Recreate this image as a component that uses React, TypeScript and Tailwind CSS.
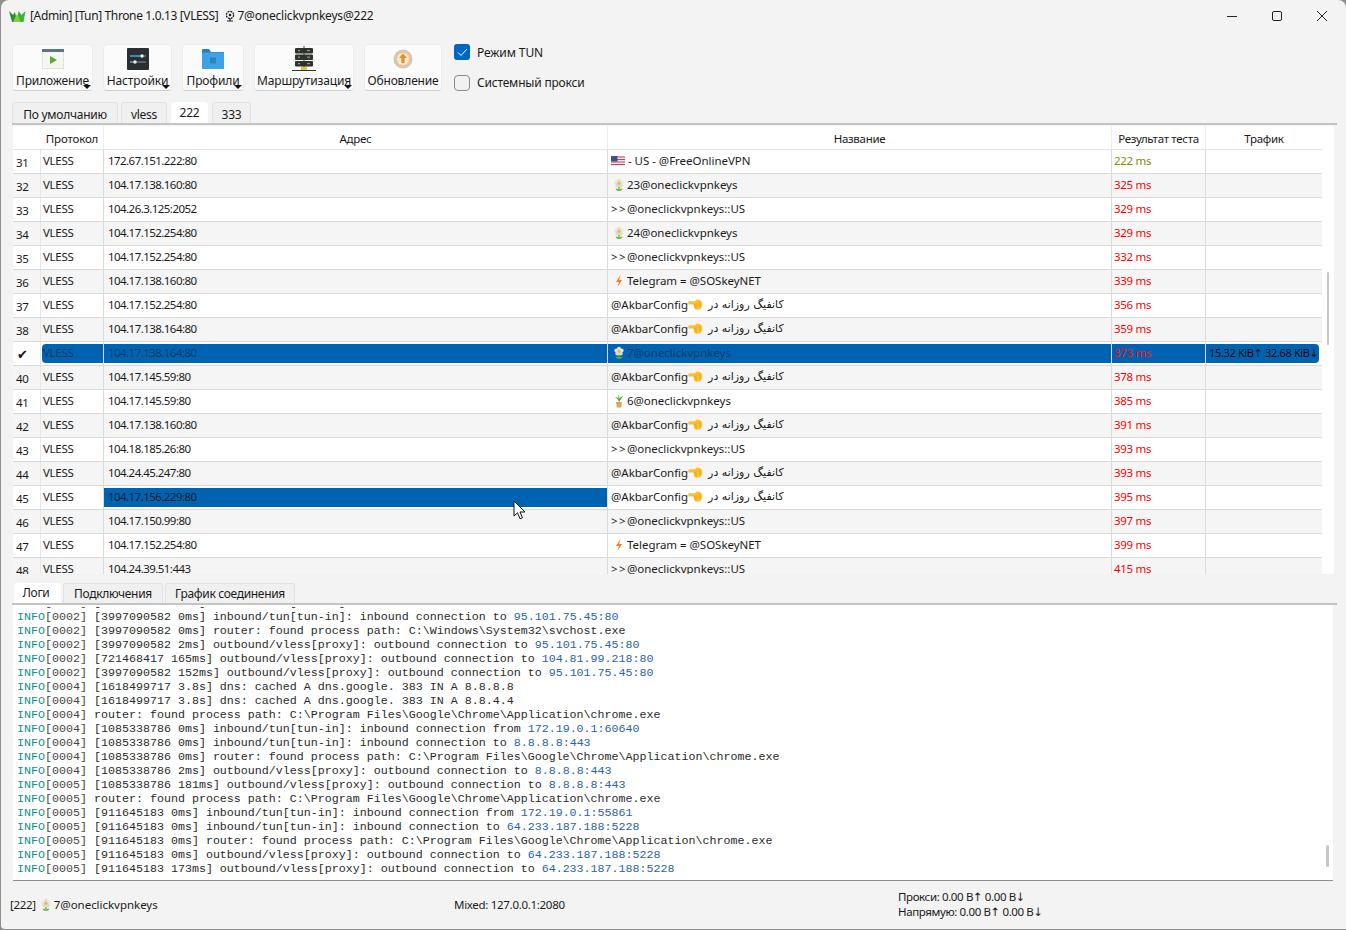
import type { ReactNode } from 'react';

const uiFont = "font-['Noto_Sans','DejaVu_Sans',sans-serif]";

function Flower() {
  return (
    <svg width="12" height="14" viewBox="0 0 12 14" className="shrink-0">
      <path d="M6 9v4" stroke="#5cb531" strokeWidth="1.4" />
      <path d="M2.500 10.500c1.500 0 3 .8 3.500 2.500-1.700 0-3-.8-3.500-2.500zM9.500 10.500c-1.500 0-3 .8-3.500 2.500 1.700 0 3-.8 3.500-2.500z" fill="#5cb531" />
      <circle cx="6" cy="2.800" r="2" fill="#dededa" />
      <circle cx="3.400" cy="4.500" r="2" fill="#e6e6e2" />
      <circle cx="8.600" cy="4.500" r="2" fill="#e6e6e2" />
      <circle cx="4.300" cy="7.400" r="2" fill="#dcdcd6" />
      <circle cx="7.700" cy="7.400" r="2" fill="#dcdcd6" />
      <circle cx="6" cy="5.300" r="1.700" fill="#f5b93c" />
    </svg>
  );
}

function Plant() {
  return (
    <svg width="12" height="14" viewBox="0 0 12 14" className="shrink-0">
      <path d="M6 8C5 5 3 4 2 3c2 0 3 1 3.500 2L5 1c1 1 1.500 2.500 1.500 4C7 3.500 8 2.500 10 2 9 4 7.500 6 6 8z" fill="#4da83a" />
      <path d="M3 8h6l-.8 5.500H3.800z" fill="#e8a05c" />
    </svg>
  );
}

function Bolt() {
  return (
    <svg width="12" height="14" viewBox="0 0 12 14" className="shrink-0">
      <path d="M7.500 1 3 8h2.800L4.500 13 9 6H6.200z" fill="#f4812a" />
    </svg>
  );
}

function Hand() {
  return (
    <svg width="15" height="12" viewBox="0 0 15 12" className="shrink-0">
      <path d="M1.200 2.200H7l1.300-1.400c2-.6 4.300.1 5.300 1.800.9 1.600.8 4.600-.3 6.200-1 1.400-3.500 2.300-5.200 1.900-1.200-.3-1.700-1.100-1.500-1.900-.7-.4-.9-1.100-.6-1.700-.6-.4-.7-1.200-.3-1.700H1.200C-.1 5-.1 2.300 1.200 2.200z" fill="#fbc02d" />
      <path d="M5.700 5.200h3M6 7h2.600M6.600 8.800h2" stroke="#d98f20" strokeWidth=".6" />
      <path d="M10.500 3c1.300 1 2 3 1.600 5.500" stroke="#f0a020" strokeWidth="1" fill="none" />
    </svg>
  );
}

function Flag() {
  return (
    <svg width="14" height="10" viewBox="0 0 14 10" className="shrink-0">
      <rect width="14" height="10" rx="1" fill="#e8e8ee" />
      <path d="M0 1h14M0 3.500h14M0 6h14M0 8.500h14" stroke="#c8444e" strokeWidth="1.200" />
      <rect width="6.500" height="5.500" rx=".6" fill="#3f4f8c" />
    </svg>
  );
}

type Row = { id: string; addr: string; name: ReactNode; ms: string };

const oneClick = <><span className="w-4 tracking-[1.5px]">&gt;&gt;</span><span>@oneclickvpnkeys::US</span></>;
const telegram = <><span className="w-4 flex justify-center"><Bolt /></span><span>Telegram = @SOSkeyNET</span></>;
const akbar = (
  <>
    <span>@AkbarConfig</span>
    <Hand />
    <span dir="rtl" className="ml-[5px] mt-[2px] font-['DejaVu_Sans',sans-serif] text-[11px] tracking-[-0.2px]">کانفیگ روزانه در</span>
  </>
);
const flower = (n: string) => <><span className="w-4 flex justify-center"><Flower /></span><span>{n}@oneclickvpnkeys</span></>;

const rows: Row[] = [
  { id: '31', addr: '172.67.151.222:80', name: <><Flag /><span>&nbsp;- US - @FreeOnlineVPN</span></>, ms: '222 ms' },
  { id: '32', addr: '104.17.138.160:80', name: flower('23'), ms: '325 ms' },
  { id: '33', addr: '104.26.3.125:2052', name: oneClick, ms: '329 ms' },
  { id: '34', addr: '104.17.152.254:80', name: flower('24'), ms: '329 ms' },
  { id: '35', addr: '104.17.152.254:80', name: oneClick, ms: '332 ms' },
  { id: '36', addr: '104.17.138.160:80', name: telegram, ms: '339 ms' },
  { id: '37', addr: '104.17.152.254:80', name: akbar, ms: '356 ms' },
  { id: '38', addr: '104.17.138.164:80', name: akbar, ms: '359 ms' },
  { id: '39', addr: '104.17.138.164:80', name: flower('7'), ms: '373 ms' },
  { id: '40', addr: '104.17.145.59:80', name: akbar, ms: '378 ms' },
  { id: '41', addr: '104.17.145.59:80', name: <><span className="w-4 flex justify-center"><Plant /></span><span>6@oneclickvpnkeys</span></>, ms: '385 ms' },
  { id: '42', addr: '104.17.138.160:80', name: akbar, ms: '391 ms' },
  { id: '43', addr: '104.18.185.26:80', name: oneClick, ms: '393 ms' },
  { id: '44', addr: '104.24.45.247:80', name: akbar, ms: '393 ms' },
  { id: '45', addr: '104.17.156.229:80', name: akbar, ms: '395 ms' },
  { id: '46', addr: '104.17.150.99:80', name: oneClick, ms: '397 ms' },
  { id: '47', addr: '104.17.152.254:80', name: telegram, ms: '399 ms' },
  { id: '48', addr: '104.24.39.51:443', name: oneClick, ms: '415 ms' },
];

const logs = [
  'INFO[0002] [3997090582 0ms] inbound/tun[tun-in]: inbound connection from 172.19.0.1:60640',
  'INFO[0002] [3997090582 0ms] inbound/tun[tun-in]: inbound connection to 95.101.75.45:80',
  'INFO[0002] [3997090582 0ms] router: found process path: C:\\Windows\\System32\\svchost.exe',
  'INFO[0002] [3997090582 2ms] outbound/vless[proxy]: outbound connection to 95.101.75.45:80',
  'INFO[0002] [721468417 165ms] outbound/vless[proxy]: outbound connection to 104.81.99.218:80',
  'INFO[0002] [3997090582 152ms] outbound/vless[proxy]: outbound connection to 95.101.75.45:80',
  'INFO[0004] [1618499717 3.8s] dns: cached A dns.google. 383 IN A 8.8.8.8',
  'INFO[0004] [1618499717 3.8s] dns: cached A dns.google. 383 IN A 8.8.4.4',
  'INFO[0004] router: found process path: C:\\Program Files\\Google\\Chrome\\Application\\chrome.exe',
  'INFO[0004] [1085338786 0ms] inbound/tun[tun-in]: inbound connection from 172.19.0.1:60640',
  'INFO[0004] [1085338786 0ms] inbound/tun[tun-in]: inbound connection to 8.8.8.8:443',
  'INFO[0004] [1085338786 0ms] router: found process path: C:\\Program Files\\Google\\Chrome\\Application\\chrome.exe',
  'INFO[0004] [1085338786 2ms] outbound/vless[proxy]: outbound connection to 8.8.8.8:443',
  'INFO[0005] [1085338786 181ms] outbound/vless[proxy]: outbound connection to 8.8.8.8:443',
  'INFO[0005] router: found process path: C:\\Program Files\\Google\\Chrome\\Application\\chrome.exe',
  'INFO[0005] [911645183 0ms] inbound/tun[tun-in]: inbound connection from 172.19.0.1:55861',
  'INFO[0005] [911645183 0ms] inbound/tun[tun-in]: inbound connection to 64.233.187.188:5228',
  'INFO[0005] [911645183 0ms] router: found process path: C:\\Program Files\\Google\\Chrome\\Application\\chrome.exe',
  'INFO[0005] [911645183 0ms] outbound/vless[proxy]: outbound connection to 64.233.187.188:5228',
  'INFO[0005] [911645183 173ms] outbound/vless[proxy]: outbound connection to 64.233.187.188:5228',
];

function LogLine({ text }: { text: string }) {
  const body = text.slice(10);
  const m = body.match(/^(.*(?:to|from) )([\d.:]+)$/);
  return (
    <div className="h-[14px] shrink-0 whitespace-pre">
      <span className="text-[#12908e]">INFO</span>
      <span className="text-[#4a4444]">{text.slice(4, 10)}</span>
      {m ? (
        <>
          <span>{m[1]}</span>
          <span className="text-[#2a62a8]">{m[2]}</span>
        </>
      ) : (
        <span>{body}</span>
      )}
    </div>
  );
}

function ToolButton({ label, icon, width, menu = true }: { label: string; icon: ReactNode; width: string; menu?: boolean }) {
  return (
    <div className={`relative h-[47px] ${width} flex flex-col items-center rounded-[4px] bg-[#fbfbfb] border border-[#ececec] border-b-[#cfcfcf]`}>
      <div className="h-[27px] flex items-center justify-center">{icon}</div>
      <div className="mt-px text-[12px] leading-[16px] tracking-[-0.15px] text-[#1a1a1a] whitespace-nowrap">{label}</div>
      {menu && <div className="absolute right-[1px] bottom-[1px] w-0 h-0 border-x-[4px] border-x-transparent border-t-[4px] border-t-[#111]" />}
    </div>
  );
}

function Tab({ label, width, active }: { label: string; width: string; active?: boolean }) {
  return (
    <div
      className={`${width} flex items-center justify-center rounded-t-[3px] text-[12px] tracking-[-0.25px] text-[#1a1a1a] ${
        active ? 'h-[21px] pt-px bg-white' : 'h-[21px] pt-[3px] bg-[#f0f0f0] border border-b-0 border-[#e2e2e2]'
      }`}
    >
      {label}
    </div>
  );
}

const gridCols = 'grid grid-cols-[28px_63px_504px_504px_94px_116px]';

export default function App() {
  return (
    <div className={`${uiFont} relative w-[1346px] h-[930px] bg-[#8f8f8f] overflow-hidden`}>
      <div className="w-[1345px] h-[929px] ml-px bg-[#f3f3f3] rounded-t-[8px] rounded-bl-[4px] flex flex-col text-[#1a1a1a]">
        {/* Title bar */}
        <div className="h-[31px] flex items-center shrink-0">
          <svg width="17" height="12" viewBox="0 0 17 12" className="ml-[8px] mt-px">
            <path d="M0 1l4 4 2-3 2 10H3z" fill="#2e8b2e" />
            <path d="M16.500 1l-4 4-3-4-2 11h7z" fill="#3fae3a" />
            <path d="M4 12l4-8 4 8z" fill="#7fd03f" />
          </svg>
          <span className="ml-[4px] text-[12px] tracking-[-0.37px] whitespace-nowrap">[Admin] [Tun] Throne 1.0.13 [VLESS]</span>
          <svg width="12" height="12" viewBox="0 0 12 12" className="ml-[6px]">
            <circle cx="6" cy="5" r="3.600" fill="none" stroke="#222" strokeWidth="1.300" strokeDasharray="2 .8" />
            <circle cx="6" cy="5" r="1.300" fill="#222" />
            <path d="M3 11h6M6 8v3" stroke="#222" strokeWidth="1.200" />
          </svg>
          <span className="ml-px text-[12px] tracking-[-0.2px]">7@oneclickvpnkeys@222</span>
          <div className="ml-auto flex items-center mr-[19px] gap-[35px]">
            <svg width="10" height="10" viewBox="0 0 10 10"><path d="M0 5.500h10" stroke="#222" strokeWidth="1" /></svg>
            <svg width="10" height="10" viewBox="0 0 10 10"><rect x=".5" y=".5" width="9" height="9" rx="1.500" fill="none" stroke="#222" /></svg>
            <svg width="10" height="10" viewBox="0 0 10 10"><path d="M0 0l10 10M10 0L0 10" stroke="#222" /></svg>
          </div>
        </div>

        {/* Toolbar */}
        <div className="h-[47px] mt-[13px] ml-[11px] flex gap-[10px] shrink-0">
          <ToolButton
            label="Приложение"
            width="w-[81px]"
            icon={
              <svg width="22" height="20" viewBox="0 0 22 20">
                <rect width="22" height="20" fill="#f4f6f2" stroke="#cfd4cc" />
                <rect width="22" height="3" fill="#5f7580" />
                <path d="M8 7l7 4-7 4z" fill="#52b02c" />
              </svg>
            }
          />
          <ToolButton
            label="Настройки"
            width="w-[69px]"
            icon={
              <svg width="22" height="22" viewBox="0 0 22 22">
                <rect width="22" height="22" rx="1" fill="#2b2f33" />
                <path d="M3 8h16M3 14h16" stroke="#6b7075" strokeWidth="1.400" />
                <path d="M3 8h11M3 14h5" stroke="#2f9ad6" strokeWidth="1.400" />
                <circle cx="15" cy="8" r="1.700" fill="#eee" />
                <circle cx="8" cy="14" r="1.700" fill="#eee" />
              </svg>
            }
          />
          <ToolButton
            label="Профили"
            width="w-[62px]"
            icon={
              <svg width="22" height="21" viewBox="0 0 22 21">
                <path d="M0 2a1 1 0 0 1 1-1h6l2 3h13v16H0z" fill="#2d7fb8" />
                <rect y="4.500" width="22" height="16.500" rx=".6" fill="#3ea3e6" />
                <path d="M8 9.500h6v6H8z" fill="#2b83c0" />
              </svg>
            }
          />
          <ToolButton
            label="Маршрутизация"
            width="w-[100px]"
            icon={
              <svg width="24" height="26" viewBox="0 0 24 26">
                <path d="M12 0v22" stroke="#444" />
                <rect x="3" y="2" width="18" height="5.500" rx="1" fill="#30322f" />
                <rect x="3" y="8.500" width="18" height="5.500" rx="1" fill="#30322f" />
                <rect x="3" y="15" width="18" height="5.500" rx="1" fill="#30322f" />
                <path d="M6 4.700h2M6 11.200h2M6 17.700h2M15 4.700h3M15 11.200h3M15 17.700h3" stroke="#9ac16a" />
                <rect x="9" y="21" width="6" height="3" fill="#e7c33a" />
                <path d="M0 24.500h24" stroke="#333" />
              </svg>
            }
          />
          <ToolButton
            label="Обновление"
            width="w-[78px]"
            menu={false}
            icon={
              <svg width="20" height="20" viewBox="0 0 20 20">
                <circle cx="10" cy="10" r="9.500" fill="#c9c9c5" />
                <circle cx="10" cy="10" r="8" fill="#f0c58c" />
                <circle cx="10" cy="10" r="6" fill="#f4ecdf" />
                <path d="M10 4.500l4 4.500h-2.400v5H8.400V9H6z" fill="#f08a1d" />
              </svg>
            }
          />
          <div className="ml-[2px] flex flex-col gap-[15px]">
            <div className="flex items-center h-[16px]">
              <div className="w-[16px] h-[16px] rounded-[3px] bg-[#0067c0] flex items-center justify-center">
                <svg width="11" height="9" viewBox="0 0 11 9"><path d="M1 4.500l3 3 6-6.500" fill="none" stroke="#fff" /></svg>
              </div>
              <span className="ml-[7px] mt-px text-[12px] tracking-[-0.1px]">Режим TUN</span>
            </div>
            <div className="flex items-center h-[16px]">
              <div className="w-[16px] h-[16px] rounded-[4px] bg-[#f1f1f1] border border-[#8b8b8b]" />
              <span className="ml-[7px] text-[12px] tracking-[-0.2px]">Системный прокси</span>
            </div>
          </div>
        </div>

        {/* Profile tabs */}
        <div className="h-[21px] mt-[11px] ml-[11px] flex gap-[3px] shrink-0">
          <Tab label="По умолчанию" width="w-[106px]" />
          <Tab label="vless" width="w-[46px]" />
          <Tab label="222" width="w-[37px] ml-px" active />
          <Tab label="333" width="w-[39px] ml-px" />
        </div>
        <div className="h-[2px] mr-[9px] ml-[11px] bg-[#c4c4c4] shrink-0" />

        {/* Profile table */}
        <div className="h-[448px] ml-[12px] w-[1321px] mt-px bg-white flex overflow-hidden shrink-0 text-[11.500px] tracking-[-0.3px]">
          <div className="w-[1309px] shrink-0">
            <div className={`${gridCols} h-[24px] items-center text-[#1a1a1a] border-b border-[#e4e4e4]`}>
              <div />
              <div className="h-full flex items-center justify-center pt-[2px] border-r border-[#eeeeee] tracking-[-0.15px]">Протокол</div>
              <div className="h-full flex items-center justify-center pt-[2px] border-r border-[#eeeeee]">Адрес</div>
              <div className="h-full flex items-center justify-center pt-[2px] border-r border-[#eeeeee]">Название</div>
              <div className="h-full flex items-center justify-center pt-[2px] border-r border-[#eeeeee] whitespace-nowrap">Результат теста</div>
              <div className="h-full flex items-center justify-center pt-[2px]">Трафик</div>
            </div>
            {rows.map((r, i) => {
              const selected = r.id === '39';
              const addrSelected = r.id === '45';
              const base = selected ? 'bg-white' : i % 2 === 1 ? 'bg-[#f5f5f5]' : 'bg-white';
              const cell = 'h-full flex items-center border-r border-[#dadada] overflow-hidden whitespace-nowrap';
              const fill = 'h-[19px] w-full flex items-center pb-[2px] bg-[#0063b1] text-[#0a3c6e]';
              return (
                <div key={r.id} className={`${gridCols} h-[24px] items-center border-b border-[#dadada] ${base}`}>
                  <div className="h-full flex items-center pl-[3px] pt-[2px] border-r border-[#e8e8e8] text-[#1a1a1a]">
                    {selected ? <span className="pl-[1px] font-['DejaVu_Sans',sans-serif] text-[13px] text-[#111]">✔</span> : r.id}
                  </div>
                  <div className={cell}>
                    {selected ? <div className={`${fill} ml-px pl-[1px] rounded-l-[4px]`}>VLESS</div> : <div className="pl-[2px] pb-[2px]">VLESS</div>}
                  </div>
                  <div className={`${cell} tracking-[-0.55px]`}>
                    {selected || addrSelected ? (
                      <div className={`${fill} pl-[4px] ${addrSelected ? 'text-[#081c30]' : ''}`}>{r.addr}</div>
                    ) : (
                      <div className="pl-[4px] pb-[2px]">{r.addr}</div>
                    )}
                  </div>
                  <div className={`${cell} tracking-[-0.03px]`}>
                    {selected ? (
                      <div className={`${fill} pl-[3px]`}>{r.name}</div>
                    ) : (
                      <div className="pl-[3px] pb-[2px] flex items-center">{r.name}</div>
                    )}
                  </div>
                  <div className={cell}>
                    {selected ? (
                      <div className={`${fill} pl-[2px] !text-[#ff1010]`}>{r.ms}</div>
                    ) : (
                      <div className={`pl-[2px] pb-[2px] ${r.id === '31' ? 'text-[#8a8a00]' : 'text-[#ff0000]'}`}>{r.ms}</div>
                    )}
                  </div>
                  <div className="h-full flex items-center overflow-hidden whitespace-nowrap">
                    {selected ? (
                      <div className="h-[19px] w-[113px] flex items-center pb-px bg-[#0063b1] rounded-r-[4px] pl-[3px] text-[#0b0b0b] text-[11px] tracking-[-0.35px]">15.32 KiB↑ 32.68 KiB↓</div>
                    ) : null}
                  </div>
                </div>
              );
            })}
          </div>
          <div className="flex-1 pt-[146px] pl-[5px]">
            <div className="w-[2px] h-[73px] bg-[#c6c6c6] rounded-full" />
          </div>
        </div>

        {/* Log tabs */}
        <div className="h-[20px] mt-[9px] ml-[13px] flex gap-[2px] shrink-0 text-[12px] tracking-[-0.33px]">
          <div className="w-[47px] h-[20px] bg-white rounded-t-[3px] flex items-center justify-center pr-[3px]">Логи</div>
          <div className="w-[100px] h-[20px] bg-[#f0f0f0] border border-b-0 border-[#e2e2e2] rounded-t-[3px] flex items-center justify-center">Подключения</div>
          <div className="w-[130px] h-[20px] bg-[#f0f0f0] border border-b-0 border-[#e2e2e2] rounded-t-[3px] flex items-center justify-center">График соединения</div>
        </div>
        <div className="h-[2px] ml-[11px] mr-[9px] bg-[#c4c4c4] shrink-0" />

        {/* Log view */}
        <div className="h-[276px] ml-[12px] w-[1320px] bg-white border-b border-[#8f8f8f] flex shrink-0 overflow-hidden">
          <div className="flex-1 mt-[2px] pl-[4px] pb-[4px] flex flex-col justify-end overflow-hidden font-['Liberation_Mono',monospace] text-[11.670px] leading-[14px] text-[#2a2a2a]">
            {logs.map((l, i) => (
              <LogLine key={i} text={l} />
            ))}
          </div>
          <div className="w-[11px] pt-[240px] pl-[4px] shrink-0">
            <div className="w-[3px] h-[22px] bg-[#c6c6c6] rounded-full" />
          </div>
        </div>

        {/* Status bar */}
        <div className="flex-1 flex items-center text-[11.500px] tracking-[-0.3px]">
          <div className="w-[452px] pl-[9px] flex items-center tracking-[-0.03px]">
            <span className="tracking-[-0.3px]">[222]</span>
            <span className="ml-[2px] w-4 flex justify-center"><Flower /></span>
            <span>7@oneclickvpnkeys</span>
          </div>
          <div className="w-[445px] pl-px">Mixed: 127.0.0.1:2080</div>
          <div className="flex flex-col leading-[15px] pb-[2px] tracking-[-0.38px]">
            <span>Прокси: 0.00 B↑ 0.00 B↓</span>
            <span>Напрямую: 0.00 B↑ 0.00 B↓</span>
          </div>
        </div>
      </div>

      {/* Mouse cursor */}
      <svg width="14" height="20" viewBox="0 0 14 20" className="absolute left-[513px] top-[500px]">
        <path d="M1 1v15l3.500-3.200 2.500 6 2.500-1-2.500-5.800H12z" fill="#fff" stroke="#111" strokeWidth="1" />
      </svg>
    </div>
  );
}
